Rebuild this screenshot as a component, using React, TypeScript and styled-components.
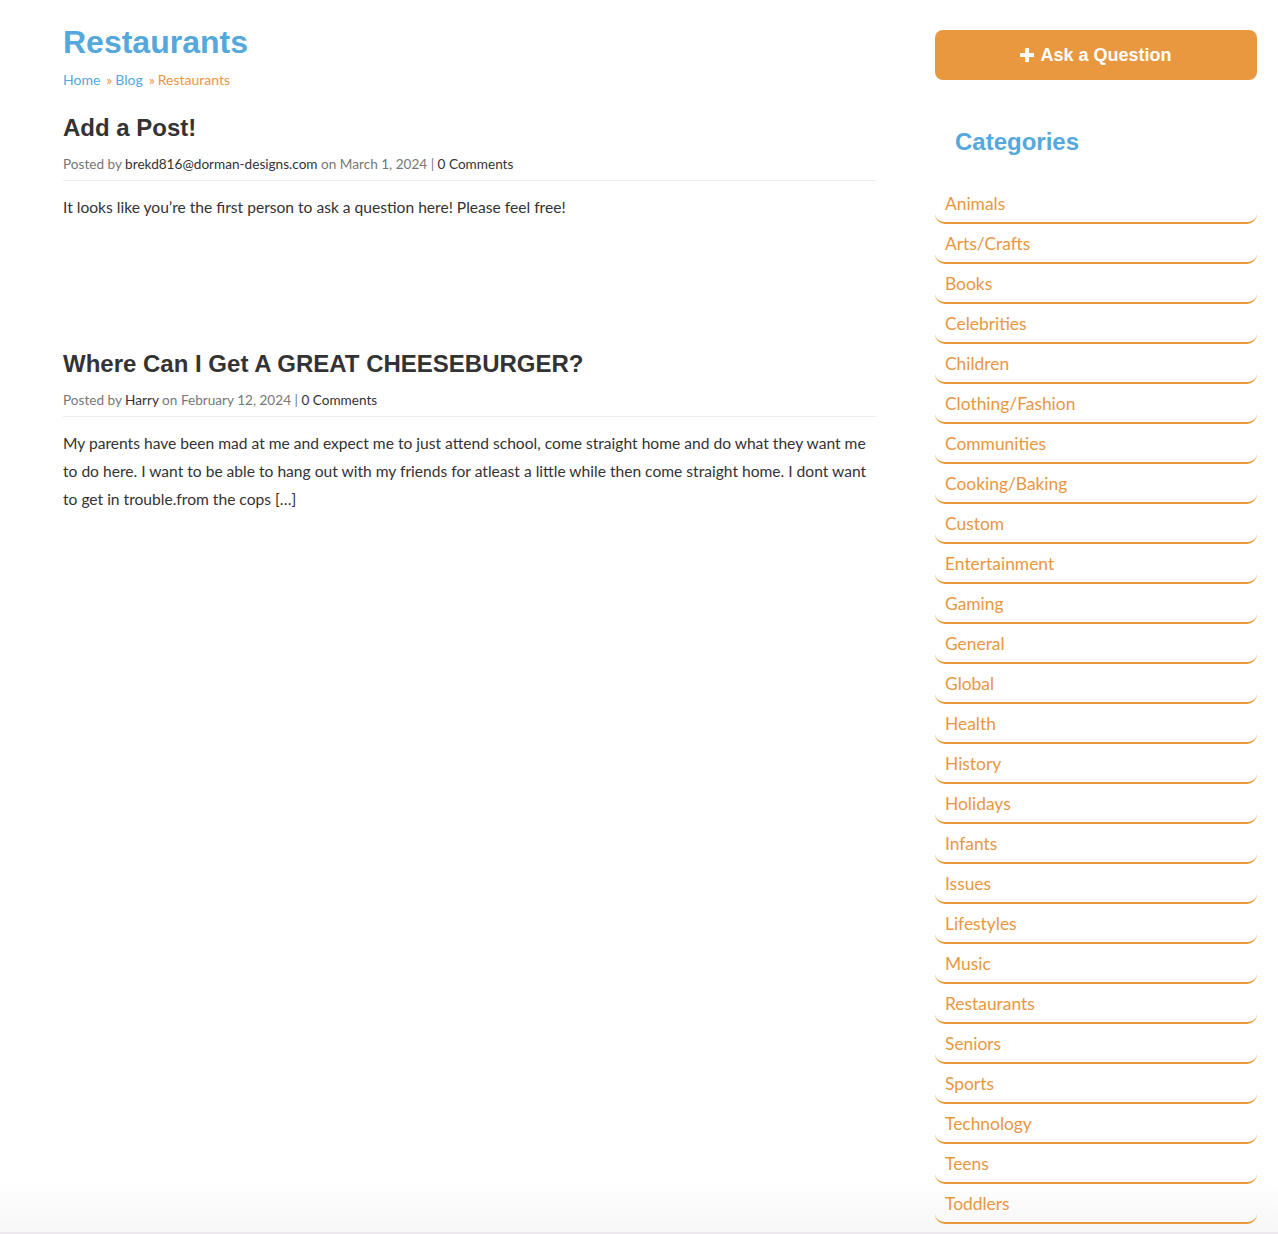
import React from "react";
import styled, { createGlobalStyle } from "styled-components";

const Global = createGlobalStyle`
  html, body { margin: 0; padding: 0; }
  body { font-family: "Lato", "Open Sans", sans-serif; color: #333; background: #fff; }
  a { text-decoration: none; }
`;

const Page = styled.div`
  min-height: 100vh;
  box-sizing: border-box;
  background: linear-gradient(to bottom, #ffffff 0, #ffffff calc(100% - 56px), #f6f7f6 calc(100% - 2px), #ede8ee calc(100% - 2px), #ede8ee 100%);
  display: grid;
  grid-template-columns: 813px 322px;
  column-gap: 59px;
  padding: 0 21px 0 63px;
`;

const Main = styled.main`
  padding-top: 22px;
`;

const PageTitle = styled.h1`
  margin: 0;
  font-family: "Liberation Sans", Arial, sans-serif;
  font-weight: 700;
  font-size: 32px;
  line-height: 40px;
  color: #55a8dc;
`;

const Crumbs = styled.div`
  margin-top: 8px;
  font-size: 14px;
  line-height: 20px;
  color: #55a8dc;
`;

const Crumb = styled.a<{ $current?: boolean }>`
  color: ${(p) => (p.$current ? "#e9973f" : "#55a8dc")};
`;

const Sep = styled.span`
  color: #e9973f;
  margin: 0 3px 0 6px;
`;

const Post = styled.article<{ $minH?: number; $top?: number }>`
  min-height: ${(p) => p.$minH ?? 0}px;
  margin-top: ${(p) => p.$top ?? 0}px;
`;

const PostTitle = styled.h2`
  margin: 0;
  font-family: "Liberation Sans", Arial, sans-serif;
  font-weight: 700;
  font-size: 24px;
  line-height: 32px;
  color: #333;
`;

const Meta = styled.div`
  margin-top: 10px;
  padding-bottom: 6px;
  border-bottom: 1px solid #eeeeee;
  font-size: 13.6px;
  line-height: 20px;
  color: #777;
`;

const MetaLink = styled.a`
  color: #333;
`;

const Body = styled.p`
  margin: 12px 0 0;
  font-size: 15.6px;
  line-height: 28px;
  color: #333;
`;

const Side = styled.aside`
  padding-top: 30px;
`;

const AskButton = styled.a`
  display: flex;
  align-items: center;
  justify-content: center;
  gap: 6px;
  height: 50px;
  border-radius: 8px;
  background: #e9983f;
  color: #fff;
  font-family: "Liberation Sans", Arial, sans-serif;
  font-weight: 700;
  font-size: 18px;
`;

const SideTitle = styled.h3`
  margin: 48px 0 0;
  padding-left: 20px;
  font-family: "Liberation Sans", Arial, sans-serif;
  font-weight: 700;
  font-size: 24px;
  line-height: 28px;
  color: #55a8dc;
`;

const CatList = styled.ul`
  list-style: none;
  margin: 28px 0 0;
  padding: 0;
`;

const CatItem = styled.li`
  height: 40px;
  box-sizing: border-box;
  padding: 8px 10px 0;
  border-bottom: 2px solid #e9973f;
  border-radius: 0 0 10px 10px;
  font-size: 17.4px;
  line-height: 24px;
`;

const CatLink = styled.a`
  color: #e9973f;
`;

const categories = [
  "Animals", "Arts/Crafts", "Books", "Celebrities", "Children", "Clothing/Fashion",
  "Communities", "Cooking/Baking", "Custom", "Entertainment", "Gaming", "General",
  "Global", "Health", "History", "Holidays", "Infants", "Issues", "Lifestyles",
  "Music", "Restaurants", "Seniors", "Sports", "Technology", "Teens", "Toddlers",
];

const PlusIcon = () => (
  <svg width="14" height="14" viewBox="0 0 14 14" aria-hidden="true">
    <path d="M5 0h4v5h5v4H9v5H5V9H0V5h5z" fill="#fff" />
  </svg>
);

export default function App() {
  return (
    <>
      <Global />
      <Page>
        <Main>
          <PageTitle>Restaurants</PageTitle>
          <Crumbs>
            <Crumb href="#">Home</Crumb>
            <Sep>»</Sep>
            <Crumb href="#">Blog</Crumb>
            <Sep>»</Sep>
            <Crumb $current>Restaurants</Crumb>
          </Crumbs>
          <Post $minH={236} $top={22}>
            <PostTitle>Add a Post!</PostTitle>
            <Meta>
              Posted by <MetaLink href="#">brekd816@dorman-designs.com</MetaLink> on March 1, 2024 | <MetaLink href="#">0 Comments</MetaLink>
            </Meta>
            <Body>It looks like you’re the first person to ask a question here! Please feel free!</Body>
          </Post>
          <Post>
            <PostTitle>Where Can I Get A GREAT CHEESEBURGER?</PostTitle>
            <Meta>
              Posted by <MetaLink href="#">Harry</MetaLink> on February 12, 2024 | <MetaLink href="#">0 Comments</MetaLink>
            </Meta>
            <Body>
              My parents have been mad at me and expect me to just attend school, come straight home and do what they want me to do here. I want to be able to hang out with my friends for atleast a little while then come straight home. I dont want to get in trouble.from the cops […]
            </Body>
          </Post>
        </Main>
        <Side>
          <AskButton href="#">
            <PlusIcon />
            Ask a Question
          </AskButton>
          <SideTitle>Categories</SideTitle>
          <CatList>
            {categories.map((c) => (
              <CatItem key={c}>
                <CatLink href="#">{c}</CatLink>
              </CatItem>
            ))}
          </CatList>
        </Side>
      </Page>
    </>
  );
}
